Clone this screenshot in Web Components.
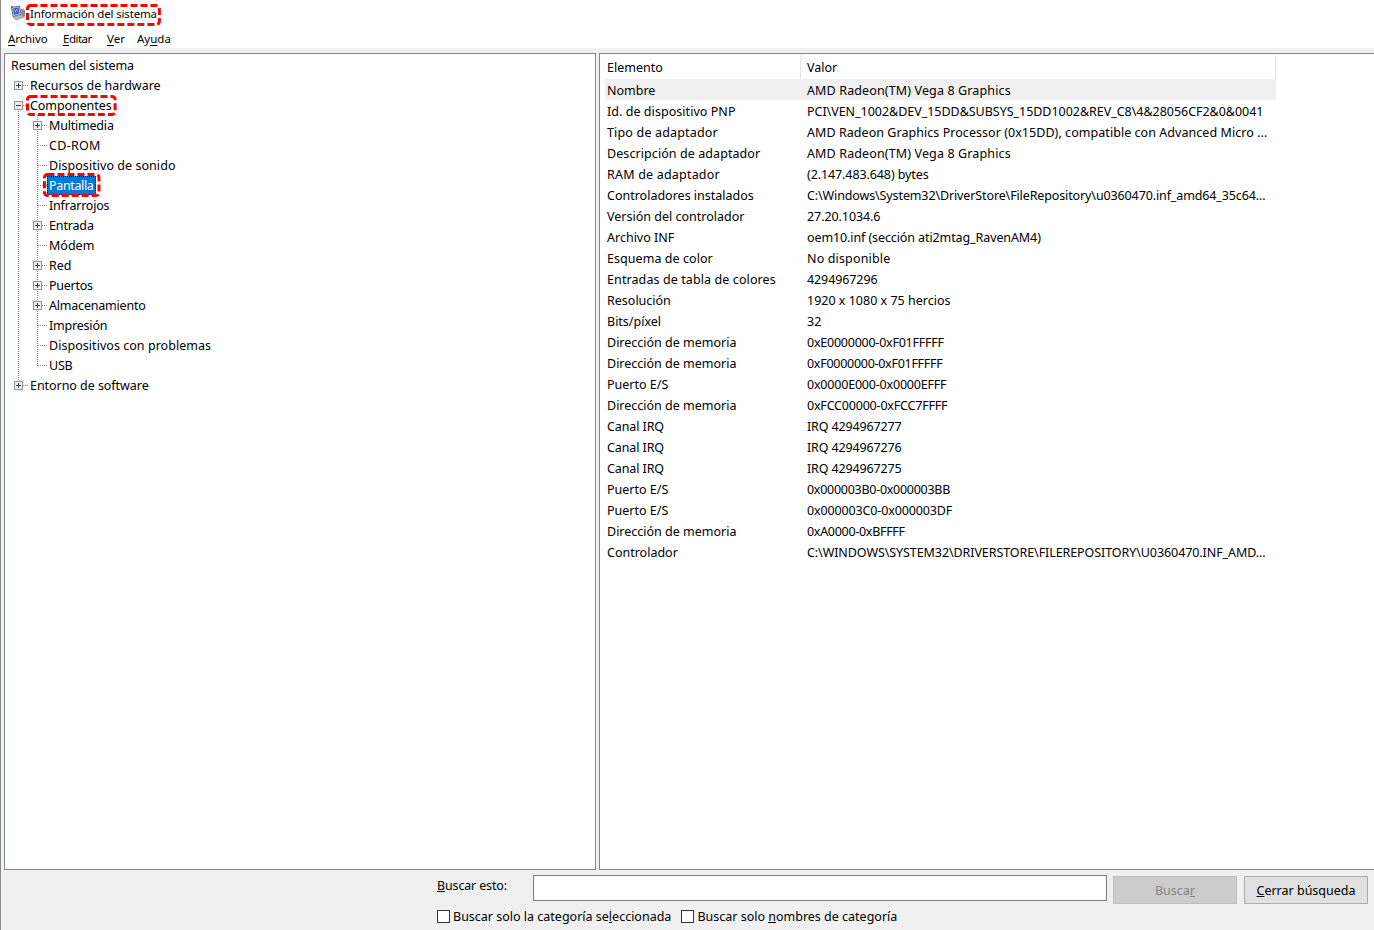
<!DOCTYPE html>
<html lang="es">
<head>
<meta charset="utf-8">
<title>Información del sistema</title>
<style>
  html, body { margin: 0; height: 100%; }
  body {
    font: 12.5px "Noto Sans", "Liberation Sans", sans-serif;
    color: #000;
    background: #f0f0f0;
    overflow: hidden;
  }
</style>
</head>
<body>
<msinfo-window>
  <title-bar slot="title">Información del sistema</title-bar>
  <menu-bar slot="menu"></menu-bar>
  <tree-panel slot="tree">
    <tree-row fit="-.1">Resumen del sistema</tree-row>
    <tree-row guides="plus-solo">Recursos de hardware</tree-row>
    <tree-row guides="minus-first" fit="-.08" marked="-1px -3px -1px -2px">Componentes</tree-row>
    <tree-row guides="pipe plus" fit="-.2">Multimedia</tree-row>
    <tree-row guides="pipe tee" fit=".3">CD-ROM</tree-row>
    <tree-row guides="pipe tee" fit=".05">Dispositivo de sonido</tree-row>
    <tree-row guides="pipe tee" fit="-.35" selected marked="-3px -5px -2px -4px">Pantalla</tree-row>
    <tree-row guides="pipe tee" fit="-.2">Infrarrojos</tree-row>
    <tree-row guides="pipe plus" fit="-.15">Entrada</tree-row>
    <tree-row guides="pipe tee">Módem</tree-row>
    <tree-row guides="pipe plus">Red</tree-row>
    <tree-row guides="pipe plus" fit="-.25">Puertos</tree-row>
    <tree-row guides="pipe plus" fit="-.2">Almacenamiento</tree-row>
    <tree-row guides="pipe tee" fit="-.2">Impresión</tree-row>
    <tree-row guides="pipe tee" fit=".04">Dispositivos con problemas</tree-row>
    <tree-row guides="pipe end" fit="-.2">USB</tree-row>
    <tree-row guides="plus-last" fit="-.05">Entorno de software</tree-row>
  </tree-panel>
  <detail-panel slot="detail">
    <detail-row label="Nombre" fit=".13" selected>AMD Radeon(TM) Vega 8 Graphics</detail-row>
    <detail-row label="Id. de dispositivo PNP" label-fit=".05" fit="-.03">PCI\VEN_1002&amp;DEV_15DD&amp;SUBSYS_15DD1002&amp;REV_C8\4&amp;28056CF2&amp;0&amp;0041</detail-row>
    <detail-row label="Tipo de adaptador" label-fit=".17" fit=".05">AMD Radeon Graphics Processor (0x15DD), compatible con Advanced Micro ...</detail-row>
    <detail-row label="Descripción de adaptador" label-fit=".08" fit=".13">AMD Radeon(TM) Vega 8 Graphics</detail-row>
    <detail-row label="RAM de adaptador" label-fit=".2" fit="-.1">(2.147.483.648) bytes</detail-row>
    <detail-row label="Controladores instalados" fit="-.12">C:\Windows\System32\DriverStore\FileRepository\u0360470.inf_amd64_35c64...</detail-row>
    <detail-row label="Versión del controlador" fit="-.08">27.20.1034.6</detail-row>
    <detail-row label="Archivo INF" fit="-.1">oem10.inf (sección ati2mtag_RavenAM4)</detail-row>
    <detail-row label="Esquema de color" label-fit=".06" fit=".15">No disponible</detail-row>
    <detail-row label="Entradas de tabla de colores" label-fit=".1" fit="-.1">4294967296</detail-row>
    <detail-row label="Resolución">1920 x 1080 x 75 hercios</detail-row>
    <detail-row label="Bits/píxel">32</detail-row>
    <detail-row label="Dirección de memoria" fit="-.24">0xE0000000-0xF01FFFFF</detail-row>
    <detail-row label="Dirección de memoria" fit="-.28">0xF0000000-0xF01FFFFF</detail-row>
    <detail-row label="Puerto E/S" fit="-.2">0x0000E000-0x0000EFFF</detail-row>
    <detail-row label="Dirección de memoria" fit="-.2">0xFCC00000-0xFCC7FFFF</detail-row>
    <detail-row label="Canal IRQ" label-fit="-.1" fit="-.15">IRQ 4294967277</detail-row>
    <detail-row label="Canal IRQ" label-fit="-.1" fit="-.15">IRQ 4294967276</detail-row>
    <detail-row label="Canal IRQ" label-fit="-.1" fit="-.15">IRQ 4294967275</detail-row>
    <detail-row label="Puerto E/S" fit="-.28">0x000003B0-0x000003BB</detail-row>
    <detail-row label="Puerto E/S" fit="-.14">0x000003C0-0x000003DF</detail-row>
    <detail-row label="Dirección de memoria" fit="-.3">0xA0000-0xBFFFF</detail-row>
    <detail-row label="Controlador" fit="-.08">C:\WINDOWS\SYSTEM32\DRIVERSTORE\FILEREPOSITORY\U0360470.INF_AMD...</detail-row>
  </detail-panel>
  <search-bar slot="search"></search-bar>
</msinfo-window>

<script>
class RedMark extends HTMLElement {
  constructor() {
    super();
    this.attachShadow({ mode: "open" });
  }

  connectedCallback() {
    const inset = this.getAttribute("inset") || "-4px";
    this.shadowRoot.innerHTML = /* html */`
      <style>
        :host { display: inline-flex; position: relative; }
        .mark {
          position: absolute;
          inset: ${inset};
          pointer-events: none;
        }
        svg { display: block; width: 100%; height: 100%; }
        rect {
          x: 1.5px;
          y: 1.5px;
          width: calc(100% - 3px);
          height: calc(100% - 3px);
          rx: 3px;
          fill: none;
          stroke: #f00;
          stroke-width: 3;
          stroke-dasharray: 7 3;
        }
      </style>
      <slot></slot>
      <div class="mark"><svg><rect></rect></svg></div>
    `;
  }
}

class MsinfoWindow extends HTMLElement {
  constructor() {
    super();
    this.attachShadow({ mode: "open" });
  }

  connectedCallback() {
    this.shadowRoot.innerHTML = /* html */`
      <style>
        :host {
          display: flex;
          flex-direction: column;
          height: 930px;
          border-left: 1px solid #8a8a8a;
          box-sizing: border-box;
        }
        .top { background: #fff; }
        .panes {
          display: grid;
          grid-template-columns: 592px 775px;
          column-gap: 3px;
          padding: 5px 0 0 3px;
        }
      </style>
      <div class="top">
        <slot name="title"></slot>
        <slot name="menu"></slot>
      </div>
      <div class="panes">
        <slot name="tree"></slot>
        <slot name="detail"></slot>
      </div>
      <slot name="search"></slot>
    `;
  }
}

class TitleBar extends HTMLElement {
  constructor() {
    super();
    this.attachShadow({ mode: "open" });
  }

  connectedCallback() {
    this.shadowRoot.innerHTML = /* html */`
      <style>
        :host {
          display: flex;
          align-items: center;
          gap: 4px;
          height: 30px;
          padding: 0 0 2px 9px;
          box-sizing: border-box;
          font-size: 11.5px;
          letter-spacing: -0.17px;
          line-height: 16px;
        }
        svg { display: block; margin-top: -2px; }
      </style>
      <svg width="16" height="16" viewBox="0 0 16 16">
        <path d="M1.5 2.5 9.5 1 11 9.5 3 11.5Z" fill="#c9ccd6" stroke="#6d7386"/>
        <path d="M3 3.5 8.5 2.5 9.5 8.5 4 9.8Z" fill="#2f55c9"/>
        <path d="M4.5 4.5 6 7.5M6.5 4 7.5 6.5" stroke="#b8cff6" fill="none"/>
        <path d="M1 1h2v2H1Z" fill="#b0488f"/>
        <path d="M3 12 11 10 14.5 12 6 15Z" fill="#b9bcc6" stroke="#777c8c" stroke-width=".6"/>
        <path d="M11.5 4 14.5 5 14.5 11 12 10Z" fill="#8f8aa8" stroke="#5d5a7c" stroke-width=".6"/>
      </svg>
      <red-mark inset="-2px -4px -4px -4px"><slot></slot></red-mark>
    `;
  }
}

class MenuBar extends HTMLElement {
  constructor() {
    super();
    this.attachShadow({ mode: "open" });
  }

  connectedCallback() {
    this.shadowRoot.innerHTML = /* html */`
      <style>
        :host {
          display: grid;
          grid-template-columns: 41px 30px 16px 34px;
          column-gap: 14px;
          align-items: center;
          height: 18px;
          box-sizing: border-box;
          padding: 0 0 2px 7px;
          font-size: 11.5px;
          white-space: nowrap;
        }
        span:nth-child(1) { letter-spacing: 0.4px; }
        span:nth-child(2) { letter-spacing: -0.1px; }
        span:nth-child(3) { letter-spacing: -0.5px; }
        u { text-underline-offset: 2px; }
      </style>
      <span><u>A</u>rchivo</span>
      <span><u>E</u>ditar</span>
      <span><u>V</u>er</span>
      <span>Ay<u>u</u>da</span>
    `;
  }
}

class TreePanel extends HTMLElement {
  constructor() {
    super();
    this.attachShadow({ mode: "open" });
  }

  connectedCallback() {
    this.shadowRoot.innerHTML = /* html */`
      <style>
        :host {
          display: block;
          height: 817px;
          box-sizing: border-box;
          border: 1px solid #82878f;
          background: #fff;
          padding: 1px 0 0 4px;
          overflow: hidden;
        }
      </style>
      <slot></slot>
    `;
  }
}

class TreeRow extends HTMLElement {
  constructor() {
    super();
    this.attachShadow({ mode: "open" });
  }

  // one 19x20 cell of the dotted tree lines
  static guide(kind) {
    const dots = `stroke="#8c8c8c" stroke-dasharray="1 1" shape-rendering="crispEdges" fill="none"`;
    const lines = {
      pipe: "M9.5 0V20",
      tee: "M9.5 0V20M10 10.5H19",
      end: "M9.5 0V11M10 10.5H19",
      plus: "M9.5 0V20M14 10.5H19",
      "plus-solo": "M14 10.5H19",
      "minus-first": "M9.5 10V20M14 10.5H19",
      "plus-last": "M9.5 0V10M14 10.5H19",
    };
    const expander = kind.startsWith("plus") || kind.startsWith("minus");
    const sign = kind.startsWith("minus") ? "M7 10.5H12" : "M7 10.5H12M9.5 8V13";
    return /* html */`
      <svg width="19" height="20" viewBox="0 0 19 20">
        <path d="${lines[kind]}" ${dots}/>
        ${expander ? `
          <rect x="5.5" y="6.5" width="8" height="8" fill="#eeeef2" stroke="#969696" shape-rendering="crispEdges"/>
          <path d="${sign}" stroke="#2f3f60" shape-rendering="crispEdges"/>` : ""}
      </svg>`;
  }

  connectedCallback() {
    const guides = (this.getAttribute("guides") || "").split(" ").filter(Boolean);
    const marked = this.getAttribute("marked");
    const fit = this.getAttribute("fit") || "0";
    const label = `<span class="label"><slot></slot></span>`;
    this.shadowRoot.innerHTML = /* html */`
      <style>
        :host {
          display: flex;
          align-items: flex-end;
          height: 20px;
          white-space: nowrap;
          letter-spacing: ${fit}px;
        }
        svg { display: block; flex: none; }
        .label {
          display: block;
          line-height: 19px;
          padding: 0 2px;
        }
        :host([selected]) .label {
          background: #0078d7;
          color: #fff;
          outline: 1px dotted #000;
          outline-offset: -1px;
        }
      </style>
      ${guides.map(TreeRow.guide).join("")}
      ${marked ? `<red-mark inset="${marked}">${label}</red-mark>` : label}
    `;
  }
}

class DetailPanel extends HTMLElement {
  constructor() {
    super();
    this.attachShadow({ mode: "open" });
  }

  connectedCallback() {
    this.shadowRoot.innerHTML = /* html */`
      <style>
        :host {
          display: block;
          height: 817px;
          box-sizing: border-box;
          border: 1px solid #82878f;
          border-right: 0;
          background: #fff;
          padding: 0 0 0 5px;
          overflow: hidden;
        }
        .head {
          display: grid;
          grid-template-columns: 196px 475px;
          height: 25px;
          width: 671px;
        }
        .head div {
          display: flex;
          align-items: center;
          border-right: 1px solid #e5e5e5;
          margin-top: 1px;
          padding-left: 2px;
        }
        .head div + div { padding-left: 6px; }
      </style>
      <div class="head"><div>Elemento</div><div>Valor</div></div>
      <slot></slot>
    `;
  }
}

class DetailRow extends HTMLElement {
  constructor() {
    super();
    this.attachShadow({ mode: "open" });
  }

  connectedCallback() {
    const labelFit = this.getAttribute("label-fit") || "0";
    const fit = this.getAttribute("fit") || "0";
    this.shadowRoot.innerHTML = /* html */`
      <style>
        :host {
          display: grid;
          grid-template-columns: 200px 471px;
          height: 21px;
          line-height: 21px;
          width: 671px;
          white-space: nowrap;
        }
        :host([selected]) { background: #f0f0f0; }
        span { padding: 1px 0 0 2px; overflow: hidden; }
      </style>
      <span style="letter-spacing: ${labelFit}px">${this.getAttribute("label")}</span>
      <span style="letter-spacing: ${fit}px"><slot></slot></span>
    `;
  }
}

class SearchBar extends HTMLElement {
  constructor() {
    super();
    this.attachShadow({ mode: "open" });
  }

  connectedCallback() {
    this.shadowRoot.innerHTML = /* html */`
      <style>
        :host {
          display: block;
          padding: 5px 5px 0 436px;
          white-space: nowrap;
        }
        .find { display: flex; align-items: flex-start; height: 31px; }
        .find label { width: 96px; line-height: 21px; letter-spacing: -0.15px; }
        .box {
          width: 574px;
          height: 26px;
          box-sizing: border-box;
          border: 1px solid #7a7a7a;
          background: #fff;
        }
        button {
          font: inherit;
          width: 124px;
          height: 28px;
          margin: 1px 0 0 6px;
          padding: 0;
          border: 1px solid #adadad;
          background: #e1e1e1;
          color: #000;
        }
        button + button { margin-left: 7px; }
        button[disabled] { background: #ccc; border-color: #bfbfbf; color: #838383; }
        .opts { display: flex; align-items: center; height: 20px; }
        .opts span { margin-left: 3px; margin-right: 10px; }
        .check {
          width: 13px;
          height: 13px;
          box-sizing: border-box;
          border: 1px solid #333;
          background: #fff;
        }
      </style>
      <div class="find">
        <label><u>B</u>uscar esto:</label>
        <div class="box"></div>
        <button disabled>Busca<u>r</u></button>
        <button><u>C</u>errar búsqueda</button>
      </div>
      <div class="opts">
        <div class="check"></div><span>Buscar solo la categoría se<u>l</u>eccionada</span>
        <div class="check"></div><span>Buscar solo <u>n</u>ombres de categoría</span>
      </div>
    `;
  }
}

customElements.define("red-mark", RedMark);
customElements.define("msinfo-window", MsinfoWindow);
customElements.define("title-bar", TitleBar);
customElements.define("menu-bar", MenuBar);
customElements.define("tree-panel", TreePanel);
customElements.define("tree-row", TreeRow);
customElements.define("detail-panel", DetailPanel);
customElements.define("detail-row", DetailRow);
customElements.define("search-bar", SearchBar);
</script>
</body>
</html>
